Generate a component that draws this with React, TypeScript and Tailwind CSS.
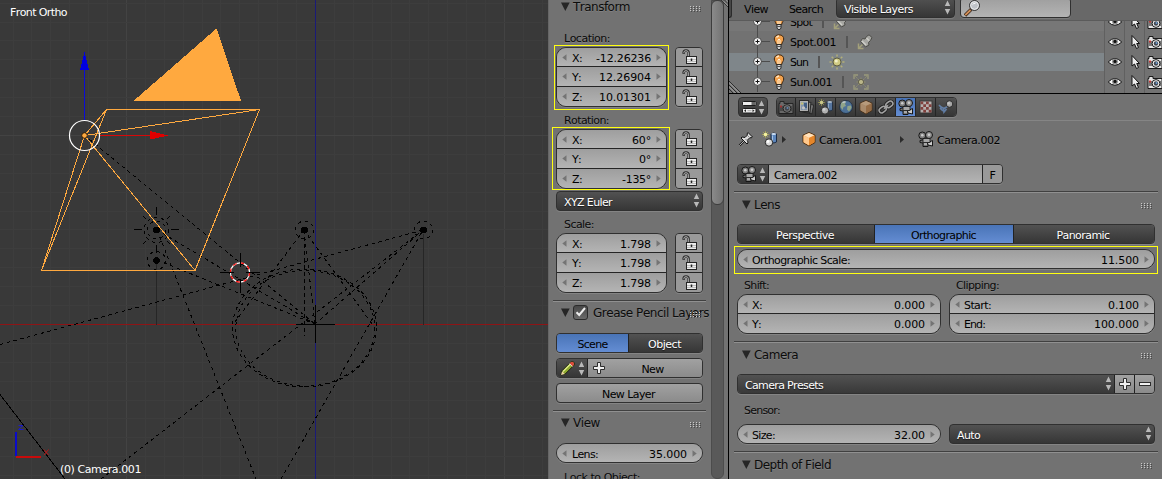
import React, { useLayoutEffect, useRef, useState } from "react";

/* Advance widths of the interface font, in thousandths of an em. */
const ADV: Record<string, number> = {
  " ": 318, "(": 390, ")": 390, "-": 361, ".": 318, ":": 337, "°": 500,
  A: 684, B: 686, C: 698, D: 770, E: 632, F: 575, G: 775, L: 557, N: 748, O: 787, P: 603, R: 695,
  S: 635, T: 611, V: 684, X: 685, Y: 611, Z: 685,
  a: 613, b: 635, c: 550, d: 635, e: 615, f: 352, g: 635, h: 634, i: 278, j: 278, k: 579, l: 278,
  m: 974, n: 634, o: 612, p: 635, r: 411, s: 521, t: 392, u: 634, v: 592, w: 818, x: 592, y: 592, z: 525,
};

/* Text set on whole-pixel advances, as the toolkit draws it. */
function T({ children, big = false, className = "" }: { children: string; big?: boolean; className?: string }) {
  const ref = useRef<HTMLSpanElement>(null);
  const [ls, setLs] = useState(0);
  useLayoutEffect(() => {
    if (!ref.current) return;
    const size = big ? 12 : 11;
    let want = 0;
    for (const c of children) {
      want += c >= "0" && c <= "9" ? (big ? 8 : 7) : Math.floor(((ADV[c] ?? 600) * size) / 1000);
    }
    ref.current.style.letterSpacing = "0px";
    setLs((want - ref.current.getBoundingClientRect().width) / children.length);
  }, [children, big]);
  return (
    <span
      ref={ref}
      style={{ letterSpacing: `${ls}px` }}
      className={`whitespace-pre [font-kerning:none] ${big ? "text-[12px]" : "text-[11px]"} ${className}`}
    >
      {children}
    </span>
  );
}

const SH_LIGHT = "[text-shadow:0_1px_0_rgba(255,255,255,0.12)]";
const SH_DARK = "[text-shadow:0_1px_1px_rgba(0,0,0,0.6)]";
const EDGE = "border border-[#303030] shadow-[0_1px_0_rgba(255,255,255,0.13)]";
const DARK = "bg-linear-to-b from-[#525252] to-[#363636]";
const BLUE = "bg-linear-to-b from-[#4974b7] to-[#648dd3]";
const GREY = "bg-linear-to-b from-[#a1a1a1] to-[#8b8b8b]";
const NUM = "bg-linear-to-b from-[#9e9e9e] to-[#b4b4b4]";
const LINE = "pt-[3px] leading-[15px]";

function UpDown() {
  return (
    <svg width="7" height="15" viewBox="0 0 7 15" className="shrink-0">
      <path d="M3.500.5 6.200 6H.8zM3.500 14.500 6.200 9H.8z" fill="#b9b9b9" />
    </svg>
  );
}

function Tri({ left = false }: { left?: boolean }) {
  return (
    <svg width="5" height="7" viewBox="0 0 5 7" className="shrink-0 self-center">
      <path d={left ? "M4.500.3V6.700L.3 3.500z" : "M.5.300V6.700L4.700 3.500z"} fill="#747474" />
    </svg>
  );
}

function NumRow({ label, value, h, tight, last }: { label: string; value: string; h: string; tight: boolean; last: boolean }) {
  return (
    <div className={`flex items-start px-[5px] ${NUM} ${h} ${last ? "" : "border-b border-[#252525]"}`}>
      <Tri left />
      <div className={`flex flex-1 justify-between pr-[5px] text-black ${LINE} ${tight ? "pl-[4px]" : "pl-[5px]"}`}>
        <T>{label}</T>
        <T>{value}</T>
      </div>
      <Tri />
    </div>
  );
}

const HEIGHTS: Record<number, string[]> = {
  1: ["h-[18px]"],
  2: ["h-[19px]", "h-[19px]"],
  3: ["h-[19px]", "h-[20px]", "h-[19px]"],
};

function NumGroup({ rows, w, ml = "", tight = false }: { rows: [string, string][]; w: string; ml?: string; tight?: boolean }) {
  return (
    <div className={`overflow-hidden rounded-[10px] ${EDGE} ${w} ${ml}`}>
      {rows.map(([l, v], i) => (
        <NumRow key={l} label={l} value={v} tight={tight} last={i === rows.length - 1} h={HEIGHTS[rows.length][i]} />
      ))}
    </div>
  );
}

function Lock() {
  return (
    <svg width="16" height="16" viewBox="0 0 16 16" className="ml-px">
      <path d="M1.700 4.800V3.400Q1.900 1.500 4 1.500 6.500 1.500 6.500 3.800V7.500" fill="none" stroke="#292929" strokeWidth="2.600" />
      <path d="M1.900 4V3.300Q2 1.700 4 1.700 6.300 1.700 6.300 3.800V8" fill="none" stroke="#b5b5b5" strokeWidth="1" />
      <rect x="4.500" y="7.500" width="10" height="7" fill="#ececec" stroke="#252525" />
      <path d="M5 10.500h9M5 12.500h9" stroke="#bcbcbc" />
      <path d="M9.500 9.500v2.500" stroke="#222" strokeWidth="1.500" />
    </svg>
  );
}

function LockGroup() {
  return (
    <div className={`ml-2 w-7 overflow-hidden rounded-[4px] ${EDGE}`}>
      {HEIGHTS[3].map((h, i) => (
        <div key={i} className={`flex items-center justify-center bg-[#999] ${h} ${i < 2 ? "border-b border-[#252525]" : ""}`}>
          <Lock />
        </div>
      ))}
    </div>
  );
}

function Grip() {
  return (
    <svg width="11" height="6" viewBox="0 0 11 6" shapeRendering="crispEdges">
      {[0, 3, 6, 9].map((x) =>
        [0, 2, 4].map((y) => <rect key={`${x}-${y}`} x={x} y={y} width="1" height="1" fill="#c9c9c9" />),
      )}
      {[1, 4, 7, 10].map((x) =>
        [1, 3, 5].map((y) => <rect key={`${x}-${y}`} x={x} y={y} width="1" height="1" fill="#4a4a4a" />),
      )}
    </svg>
  );
}

function Title({ children, check = false, wide = false }: { children: string; check?: boolean; wide?: boolean }) {
  return (
    <div className="flex h-[20px] items-start pl-[8px] pr-[6px]">
      <svg width="9" height="10" viewBox="0 0 9 10" className="mt-[5px] shrink-0">
        <path d="M0 .5H8.700L4.300 9z" fill="#262626" />
      </svg>
      {check && (
        <div className="ml-[3px] mt-[2px] flex size-[15px] shrink-0 items-center justify-center rounded-[3px] border border-[#2b2b2b] bg-linear-to-b from-[#484848] to-[#6a6a6a]">
          <svg width="13" height="13" viewBox="0 0 13 13" className="shrink-0">
            <path d="M2.500 6.200 5.200 9 11 2" fill="none" stroke="#eee" strokeWidth="2" />
          </svg>
        </div>
      )}
      <div className={`flex-1 pt-[2px] text-[12px] leading-[16px] text-[#0c0c0c] ${check ? "ml-[5px] w-0" : "ml-[3px]"} ${SH_LIGHT}`}>
        <T big>{children}</T>
      </div>
      <div className={wide ? "pt-[8px]" : "pt-[9px]"}>
        <Grip />
      </div>
    </div>
  );
}

const Rule = ({ className = "" }: { className?: string }) => (
  <div className={`h-[2px] shrink-0 border-b border-t border-b-[#909090] border-t-[#404040] ${className}`} />
);

function Label({ children, className = "" }: { children: string; className?: string }) {
  return (
    <div className={`h-[16px] leading-[15px] text-[#0a0a0a] ${SH_LIGHT} ${className}`}>
      <T>{children}</T>
    </div>
  );
}

/* ---------- icons, 16x16 ---------- */

const I = ({ children, className = "" }: { children: React.ReactNode; className?: string }) => (
  <svg width="16" height="16" viewBox="0 0 16 16" className={`shrink-0 ${className}`}>
    {children}
  </svg>
);

const MovieCam = () => (
  <I>
    <path d="M4.500 9 10 9.500V15.500H5V12L2 11.500V9.500z" fill="#777" stroke="#161616" />
    <path d="M9.500 12 14.500 9.500V15L10 14z" fill="#ccc" stroke="#161616" />
    <circle cx="4.300" cy="4.500" r="3.500" fill="#7d7d7d" stroke="#161616" />
    <circle cx="11" cy="4" r="3.500" fill="#8f8f8f" stroke="#161616" />
    <rect x="5" y="7.500" width="7" height="4" fill="#a7a7a7" stroke="#161616" strokeWidth=".8" />
    <circle cx="4.300" cy="4.300" r="1.300" fill="#ccc" />
    <circle cx="11" cy="3.800" r="1.300" fill="#ccc" />
    <path d="M6 13h3" stroke="#ddd" />
  </I>
);
const Cube = ({ dim = false }: { dim?: boolean }) => (
  <I>
    <path d="M8 1.500 14 4.200V11.500L8 15 2 11.500V4.200z" fill={dim ? "#c08f5e" : "#f0973a"} stroke="#4a2c10" />
    <path d="M2.500 4.500 8 7V14.400L2.500 11.200z" fill={dim ? "#cda37a" : "#ffc88c"} />
    <path d="M2.600 4.300 8 1.900 13.400 4.300 8 6.900z" fill={dim ? "#dcb68e" : "#ffe2bd"} />
    <path d="M8 7 13.500 4.500V11.200L8 14.400z" fill={dim ? "#b37b48" : "#e5862a"} />
  </I>
);
const SceneIcon = () => (
  <I>
    <path d="M9 3Q11.500 1 14.500 3V11Q12 13 9 11z" fill="#5c86bd" stroke="#1c2c44" />
    <ellipse cx="11.700" cy="3" rx="2.400" ry="1" fill="#cfe0f3" />
    <path d="M10.500 4.500v6" stroke="#a9c6e6" />
    <circle cx="7" cy="11.500" r="3.700" fill="#d8d8d8" stroke="#252525" />
    <circle cx="6" cy="10.500" r="1.400" fill="#fff" />
    <path d="M3.500 0v7M0 3.500h7M1 1l5 5M6 1 1 6" stroke="#b9b44e" strokeWidth=".7" />
    <circle cx="3.500" cy="3.500" r="1.800" fill="#f4f1a0" />
  </I>
);
const PhotoCam = ({ dim = false }: { dim?: boolean }) => (
  <I>
    <path d="M1 4.500H2V2.500H6V4.500H15V14.500H1z" fill={dim ? "#777" : "#e3e3e3"} stroke="#1b1b1b" />
    <rect x="1.500" y="7" width="13" height="5" fill={dim ? "#4c4c4c" : "#777"} />
    <circle cx="9" cy="9.500" r="3.900" fill={dim ? "#8c8c8c" : "#f0f0f0"} stroke="#1b1b1b" />
    <circle cx="9" cy="9.500" r="2.200" fill="#41464f" />
    <circle cx="9.500" cy="9" r="1" fill="#6f9dd0" />
    <path d="M3 6.500v2" stroke="#d22" strokeWidth="1.500" />
  </I>
);
const Layers = () => (
  <I>
    <rect x="6" y="5" width="9" height="9" fill="#888" stroke="#222" transform="rotate(12 10 9)" />
    <rect x="3.500" y="3" width="9" height="10" fill="#a5a5a5" stroke="#222" transform="rotate(5 8 8)" />
    <rect x="1.500" y="1.500" width="9" height="11" fill="#d6d6d6" stroke="#222" />
    <rect x="3" y="3" width="6" height="8" fill="#98b2d2" />
    <path d="M6 4h3v5H6z" fill="#42689c" />
    <circle cx="5.500" cy="8.800" r="1.600" fill="#eee" />
    <circle cx="4.200" cy="4.500" r="1.200" fill="#efe884" />
  </I>
);
const World = () => (
  <I>
    <circle cx="8" cy="8" r="6.500" fill="#5080b5" stroke="#1d2d42" />
    <path d="M3 4Q5 1.500 8 2.500L7 5 8 7 5.500 8 4.500 11 2.500 8zM9.500 7 13 6.500 13.500 9 11 12.500 9 10.500z" fill="#a9c3a0" />
    <path d="M4.500 3.500 7.500 2.800" stroke="#e2eef8" strokeWidth="1.400" />
  </I>
);
const Chain = () => (
  <I>
    <g fill="none" transform="rotate(-38 8 8)">
      <g stroke="#191919" strokeWidth="3.400">
        <rect x="0" y="5.500" width="7.500" height="5" rx="2.500" />
        <rect x="8.500" y="5.500" width="7.500" height="5" rx="2.500" />
      </g>
      <g stroke="#c4c4c4" strokeWidth="1.500">
        <rect x="0" y="5.500" width="7.500" height="5" rx="2.500" />
        <rect x="8.500" y="5.500" width="7.500" height="5" rx="2.500" />
        <path d="M5.500 8h5" />
      </g>
    </g>
  </I>
);
const Checker = () => (
  <I>
    <rect x="2" y="2" width="12" height="12" fill="#ddd5d3" stroke="#333" />
    {[0, 1, 2, 3].map((r) =>
      [0, 1, 2, 3].map((c) =>
        (r + c) % 2 === 0 ? <rect key={`${r}${c}`} x={2.5 + c * 2.75} y={2.5 + r * 2.75} width="2.750" height="2.750" fill="#96403c" /> : null,
      ),
    )}
  </I>
);
const Physics = () => (
  <I>
    <path d="M1 6 3 8 6 9.500 9.500 7.500M5.500 9.500 6 13 8.500 10M2 9 5 12" stroke="#6d92c6" strokeWidth="1.700" fill="none" />
    <circle cx="11.500" cy="5" r="3.300" fill="#c7c7c7" stroke="#252525" />
    <circle cx="10.700" cy="4.200" r="1.200" fill="#eee" />
  </I>
);
const Pin = () => (
  <I>
    <path d="M6 10 1.500 14.500" stroke="#161616" strokeWidth="2.200" />
    <path d="M6 10 1.500 14.500" stroke="#ddd" strokeWidth=".8" />
    <path d="M10 1.500 14.500 6 13 7 12 6.500 9.500 9 10 12 9 13 3 7 4 6 7 6.500 9.500 4 9 3z" fill="#dcdcdc" stroke="#161616" />
    <path d="M7.500 8 9.500 10M10 5 11.500 6.500" stroke="#888" />
  </I>
);
const Bulb = () => (
  <I>
    <path d="M8 .8C4.800.8 3.300 2.800 3.300 5S5 8 5.300 10.500H10.700C11 8 12.700 7.200 12.700 5S11.200.8 8 .8z" fill="#f3a24e" stroke="#3e2812" />
    <path d="M5.500 3.500Q6.500 2 8 2" stroke="#ffe9c9" strokeWidth="1.500" fill="none" />
    <path d="M7 10V6L8 5 9 6V10" stroke="#fff0d6" fill="none" />
    <path d="M6 10.500H10V14L9 15.500H7L6 14z" fill="#d2d2d2" stroke="#2b2b2b" />
    <path d="M6 12.500h4" stroke="#555" />
  </I>
);
const SpotIcon = () => (
  <I>
    <path d="M1.500 9.500v5h5M1.500 14.500 5.500 10.500" stroke="#a3a07a" strokeWidth="1.500" fill="none" />
    <path d="M9.500 2.500 12 .8 15 3.500 13.500 6.500 11.500 8.500 12 11 8.500 13 3.500 7.500 5.500 4.500 8 5z" fill="#a6a6a2" stroke="#4c4c48" />
    <path d="M5 7 9 11M9.500 4 12 6.500" stroke="#cfcfc9" strokeWidth="1.400" />
  </I>
);
const SunIcon = () => (
  <I>
    <path d="M8 .5v15M.5 8h15M2.700 2.700l10.600 10.600M13.300 2.700 2.700 13.300" stroke="#b3af79" strokeWidth="1.500" />
    <circle cx="8" cy="8" r="5.400" fill="#7f8684" />
    <circle cx="8" cy="8" r="4" fill="#cfca82" stroke="#5e5c42" />
    <circle cx="7.300" cy="7" r="1.500" fill="#f2f0c9" />
  </I>
);
const AreaIcon = () => (
  <I>
    <path d="M1 5V1H5M11 1h4v4M15 11v4h-4M5 15H1V11" stroke="#9b9a7c" strokeWidth="1.300" fill="none" />
    <path d="M1.500 1.500 4.500 4.500M14.500 1.500l-3 3M14.500 14.500l-3-3M1.500 14.500l3-3M8 3.500v9M3.500 8h9M5 5l6 6M11 5l-6 6" stroke="#8f8e6e" strokeWidth=".9" />
    <circle cx="8" cy="8" r="2.600" fill="#bbb78a" stroke="#5c5a46" strokeWidth=".9" />
  </I>
);
const Eye = () => (
  <I>
    <path d="M1.200 8Q7.800 1 14.800 8Q7.800 14.500 1.200 8z" fill="#f4f4f4" stroke="#181818" />
    <circle cx="8" cy="7.600" r="2.900" fill="#8f8f8f" />
    <circle cx="8" cy="7.400" r="1.600" fill="#111" />
  </I>
);
const Cursor = () => (
  <I>
    <path d="M5 1.500V12L7.500 10 9.500 14.500 11.500 13.500 9.700 9.500H12.500z" fill="#eee" stroke="#101010" />
  </I>
);
const PlusIcon = () => (
  <svg width="12" height="12" viewBox="0 0 12 12" className="shrink-0">
    <path d="M4.500.5h3v4h4v3h-4v4h-3v-4h-4v-3h4z" fill="#efefef" stroke="#2c2c2c" />
  </svg>
);
const MinusIcon = () => (
  <svg width="12" height="12" viewBox="0 0 12 12" className="shrink-0">
    <rect x=".5" y="4.500" width="11" height="3" fill="#efefef" stroke="#2c2c2c" />
  </svg>
);
const Pencil = () => (
  <I>
    <path d="M1 15 2 10.800 10.500 2.300Q12 .8 13.800 2.200 15.200 4 13.700 5.500L5.200 14z" fill="#8ea92f" stroke="#1f2410" />
    <path d="M3 11.500 10.500 4" stroke="#e1ee8c" strokeWidth="1.300" />
    <path d="M10.500 2.500Q12.200 1 13.500 2.500T13.500 5.300L12.500 6.300 9.700 3.400z" fill="#de4a3c" />
    <path d="M9.500 3.600 12.400 6.500" stroke="#ddd" />
    <path d="M1 15 2.100 11.200 4.800 14z" fill="#ecd3a5" />
  </I>
);
const Magnifier = () => (
  <svg width="18" height="17" viewBox="0 0 18 17">
    <path d="M1 15.500 7 9.500" stroke="#3b2618" strokeWidth="3.400" />
    <path d="M1.200 15.200 6.500 10" stroke="#d38f57" strokeWidth="1.800" />
    <circle cx="10.500" cy="5.500" r="4.900" fill="#bfc3c8" stroke="#222" />
    <circle cx="10.500" cy="5.500" r="3.900" fill="none" stroke="#f1f1f1" />
    <path d="M8.500 4.700Q9.500 3.200 11.500 3.200" stroke="#fff" fill="none" />
  </svg>
);

/* ---------- 3D viewport ---------- */

function Lamp({ x, y }: { x: number; y: number }) {
  return (
    <g>
      <circle cx={x} cy={y} r="3.400" fill="#000" />
      <circle cx={x} cy={y} r="9" fill="none" stroke="#000" strokeDasharray="3 4.070" />
    </g>
  );
}

function Viewport() {
  const cols = Array.from({ length: 29 }, (_, i) => i - 16);
  const rows = Array.from({ length: 26 }, (_, i) => i - 17);
  const links: [number, number, number, number][] = [
    [84, 135, 315, 324], [157, 230, 315, 324], [157, 260, 315, 324], [0, 344.5, 423, 230],
    [157, 230, 256, 479], [101, 479, 423, 230], [315, 324, 423, 230], [281, 479, 423, 230],
    [304, 230, 315, 324], [304.5, 230, 304.5, 336], [304, 230, 235, 322], [304, 230, 372, 324],
  ];
  return (
    <svg width="548" height="479" viewBox="0 0 548 479" className="shrink-0 bg-[#393939]">
      <g shapeRendering="crispEdges">
        {cols.map((i) => (
          <rect key={`c${i}`} x={Math.floor(315.4 + i * 18.9)} y="0" width="1" height="479" fill={i % 10 === 0 ? "#434343" : "#3d3d3d"} />
        ))}
        {rows.map((i) => (
          <rect key={`r${i}`} x="0" y={Math.floor(324.4 + i * 18.9)} width="548" height="1" fill={i % 10 === 0 ? "#434343" : "#3d3d3d"} />
        ))}
        <rect x="0" y="324" width="548" height="1" fill="#8e1416" />
        <rect x="315" y="0" width="1" height="479" fill="#1a1a78" />
        <path d="M156.500 262V325M423.500 234V325" stroke="#262626" />
        <g stroke="#000" strokeDasharray="3.500 3.500" fill="none">
          {links.map(([a, b, c, d], i) => (
            <line key={i} x1={a} y1={b} x2={c} y2={d} />
          ))}
          <ellipse cx="304.500" cy="328" rx="72" ry="59" />
          <ellipse cx="305.300" cy="328.300" rx="69.500" ry="57.800" strokeDasharray="3 4" />
        </g>
        <path d="M296 324.500H335M315.500 305V343M0 394.500 65 479" stroke="#000" />
        <Lamp x={156.500} y={230} />
        <Lamp x={156.500} y={260.500} />
        <Lamp x={304.500} y={230} />
        <Lamp x={423.500} y={230} />
        <g stroke="#000" fill="none">
          <circle cx="156.500" cy="230" r="12.500" strokeDasharray="3 4" />
          <path d="M134 229.500h8M171 229.500h8M156.500 207v8M156.500 245v8M143 216l3 3M170 216l-3 3M143 244l3-3M170 244l-3-3" />
        </g>
        <path
          d="M106.500 109.500H259.500L195 270.500H41.500zM84.500 135.500 106.500 109.500M84.500 135.500 259.500 109.500M84.500 135.500 195 270.500M84.500 135.500 41.500 270.500"
          stroke="#ffa93f"
          fill="none"
        />
        <path d="M216.500 28.500 241 100.800H133.700z" fill="#ffa93f" />
        <path d="M84.500 69V120" stroke="#0b0bd8" />
        <path d="M84.500 51.500 80 70H89z" fill="#0000e0" />
        <path d="M99 135.500H150" stroke="#d80808" />
        <path d="M150 131V139.500L168 135.500z" fill="#e00000" />
      </g>
      <circle cx="84.500" cy="135.500" r="15" fill="none" stroke="#fff" strokeWidth="1.200" />
      <circle cx="84.500" cy="135.500" r="2.800" fill="#ffa93f" stroke="#2b1a05" />
      <circle cx="240" cy="272.500" r="9.600" fill="none" stroke="#fff" strokeWidth="1.200" />
      <circle cx="240" cy="272.500" r="9.600" fill="none" stroke="#f00" strokeWidth="1.200" strokeDasharray="3.770" />
      <path d="M220 272.500H234M246 272.500H260M240.500 253V267M240.500 279V293" stroke="#000" shapeRendering="crispEdges" />
      <g shapeRendering="crispEdges">
        <rect x="15" y="432" width="2" height="24" fill="#0b0bcb" />
        <rect x="16" y="456" width="25" height="2" fill="#c80b0b" />
      </g>
      <path d="M18.500 425.500H23L18.500 429.500H23.500" stroke="#1c1cc8" fill="none" />
      <path d="M44 449.500 48.500 455M48.500 449.500 44 455" stroke="#b81616" fill="none" />
    </svg>
  );
}

/* ---------- sidebar ---------- */

function Sidebar() {
  return (
    <div className="flex w-[180px] shrink-0 overflow-hidden border-l border-[#666] bg-[#727272]">
      <div className="flex w-[158px] shrink-0 flex-col pl-[4px] [&>*]:shrink-0">
        <div className="-mt-[3px]"><Title>Transform</Title></div>
        <Label className="ml-[11px] mt-[14px]">Location:</Label>
        <div className="relative ml-[3px] flex">
          <div className="absolute -left-[2px] -top-[2px] h-[65px] w-[115px] border border-[#ffff10]" />
          <NumGroup w="w-[111px]" rows={[["X:", "-12.26236"], ["Y:", "12.26904"], ["Z:", "10.01301"]]} />
          <LockGroup />
        </div>
        <Label className="ml-[11px] mt-[6px]">Rotation:</Label>
        <div className="relative ml-[3px] flex">
          <div className="absolute -left-[4px] -top-[2px] h-[63px] w-[118px] border border-[#ffff10]" />
          <NumGroup w="w-[111px]" rows={[["X:", "60°"], ["Y:", "0°"], ["Z:", "-135°"]]} />
          <LockGroup />
        </div>
        <Dropdown className={`ml-[3px] mt-[2px] w-[147px] rounded-[4px] ${EDGE}`}>XYZ Euler</Dropdown>
        <Label className="ml-[11px] mt-[6px]">Scale:</Label>
        <div className="ml-[3px] flex">
          <NumGroup w="w-[111px]" rows={[["X:", "1.798"], ["Y:", "1.798"], ["Z:", "1.798"]]} />
          <LockGroup />
        </div>
        <Rule className="mr-px mt-[7px]" />
        <div className="mt-px"><Title check>Grease Pencil Layers</Title></div>
        <div className={`ml-[3px] mt-[10px] flex h-[20px] w-[147px] overflow-hidden rounded-[4px] text-center ${EDGE}`}>
          <div className={`w-[72px] border-r border-[#222] text-black ${LINE} ${BLUE}`}><T>Scene</T></div>
          <div className={`flex-1 pr-[2px] text-white ${LINE} ${DARK} ${SH_DARK}`}><T>Object</T></div>
        </div>
        <div className={`ml-[3px] mt-[5px] flex h-[20px] w-[147px] overflow-hidden rounded-[4px] ${EDGE}`}>
          <div className={`flex w-[31px] items-center justify-between border-r border-[#222] pl-[3px] pr-[2px] ${DARK}`}>
            <Pencil />
            <UpDown />
          </div>
          <div className={`flex flex-1 items-center pl-[5px] text-black ${GREY}`}>
            <PlusIcon />
            <div className={`flex-1 pr-[2px] text-center ${LINE}`}><T>New</T></div>
          </div>
        </div>
        <div className={`ml-[3px] mt-[5px] h-[20px] w-[147px] rounded-[4px] pr-[2px] text-center text-black ${LINE} ${EDGE} ${GREY}`}>
          <T>New Layer</T>
        </div>
        <Rule className="mr-px mt-[7px]" />
        <div className="mt-px"><Title>View</Title></div>
        <NumGroup w="w-[147px]" ml="ml-[3px] mt-[10px]" rows={[["Lens:", "35.000"]]} />
        <Label className="ml-[11px] mt-[7px]">Lock to Object:</Label>
      </div>
      <div className="ml-[4px] h-[479px] w-[13px] shrink-0 rounded-b-[6px] border border-[#4c4c4c] bg-[#595959]">
        <div className="-ml-px -mt-px h-[205px] w-[13px] rounded-[6px] border border-[#3d3d3d] bg-linear-to-r from-[#8a8a8a] to-[#737373]" />
      </div>
      <svg width="7" height="9" viewBox="0 0 7 9" className="-ml-[3px] shrink-0">
        <path d="M0 0 7 7M3.500 0 7 3.500" stroke="#333" />
        <path d="M1.200 0 7 5.800M4.700 0 7 2.300" stroke="#aaa" strokeWidth=".7" />
      </svg>
    </div>
  );
}

/* ---------- outliner ---------- */

function OutRow({ name, icon, cls }: { name: string; icon: React.ReactNode; cls: string }) {
  return (
    <div className="flex h-[20px] shrink-0">
      <div className={`mb-[2px] flex h-[18px] flex-1 items-center pl-[24px] ${cls}`}>
        <svg width="17" height="20" viewBox="0 0 17 20" className="-my-px shrink-0">
          <path d="M4.500 0V20M8 9.500H17" stroke="#4c4c4c" />
          <circle cx="4.500" cy="9.500" r="3.900" fill="#f0f0f0" stroke="#2a2a2a" strokeWidth=".8" />
          <path d="M2.500 9.500h4M4.500 7.500v4" stroke="#111" />
        </svg>
        <div className="ml-px"><Bulb /></div>
        <div className="ml-[3px] pb-px pt-[2px] leading-[15px] text-black"><T>{name}</T></div>
        <div className="ml-[10px] h-[12px] w-[2px] bg-[#555]" />
        <div className="ml-[9px]">{icon}</div>
      </div>
      {[<Eye key="e" />, <Cursor key="c" />, <PhotoCam key="p" />].map((ic, i) => (
        <div key={i} className={`flex items-center border-l border-[#606060] pb-[2px] pl-[2px] ${i === 2 ? "w-[18px]" : "w-[20px]"}`}>{ic}</div>
      ))}
    </div>
  );
}

function Outliner() {
  return (
    <div className="h-[93px] shrink-0 overflow-hidden">
      <div className="flex h-[21px] items-start border-b border-[#5b5b5b] bg-[#686868] text-black">
        <div className="h-[18px] w-[3px] rounded-br-[4px] border-b border-r border-[#2b2b2b] bg-[#474747]" />
        <div className="ml-[12px] w-[45px] pt-[2px] leading-[15px]"><T>View</T></div>
        <div className="w-[47px] pt-[2px] leading-[15px]"><T>Search</T></div>
        <div className={`-mt-[3px] flex h-[21px] w-[119px] items-center justify-between rounded-[4px] pl-[7px] pr-[3px] text-white ${EDGE} ${DARK} ${SH_DARK}`}>
          <div className="pt-[4px] leading-[15px]"><T>Visible Layers</T></div>
          <UpDown />
        </div>
        <div className={`-mt-[3px] ml-[5px] h-[21px] w-[111px] rounded-[4px] pl-[3px] pt-[2px] ${EDGE} ${NUM}`}>
          <Magnifier />
        </div>
      </div>
      <div className="flex h-[72px] flex-col overflow-hidden">
        <div className="h-[12px] shrink-0 overflow-hidden">
          <div className="-mt-[8px]"><OutRow name="Spot" icon={<SpotIcon />} cls="bg-[#777777]" /></div>
        </div>
        <OutRow name="Spot.001" icon={<SpotIcon />} cls="" />
        <OutRow name="Sun" icon={<SunIcon />} cls="bg-[#7f868a]" />
        <OutRow name="Sun.001" icon={<AreaIcon />} cls="" />
      </div>
    </div>
  );
}

/* ---------- properties editor ---------- */

function Dropdown({ children, className }: { children: string; className: string }) {
  return (
    <div className={`flex h-[20px] items-start justify-between pl-[7px] pr-[2px] text-white ${DARK} ${SH_DARK} ${className}`}>
      <div className={LINE}><T>{children}</T></div>
      <div className="pt-px"><UpDown /></div>
    </div>
  );
}

function Properties() {
  const tabs = [<PhotoCam dim key="0" />, <Layers key="1" />, <SceneIcon key="2" />, <World key="3" />, <Cube dim key="4" />, <Chain key="5" />, <MovieCam key="6" />, <Checker key="7" />, <Physics key="8" />];
  return (
    <div className="flex flex-1 flex-col overflow-hidden border-t border-black">
      <div className="flex h-[27px] shrink-0 items-start border-b border-[#858585] pl-[9px] pt-[3px]">
        <div className={`flex h-[20px] w-[30px] items-center justify-between rounded-[4px] pl-[3px] pr-[2px] ${EDGE} ${DARK}`}>
          <svg width="15" height="14" viewBox="0 0 15 14">
            <rect x=".5" y="1.500" width="13.500" height="4" rx="1" fill="#eee" stroke="#1c1c1c" />
            <rect x="9.500" y="2" width="4" height="3" fill="#666" />
            <rect x=".5" y="8.500" width="13.500" height="4.500" rx="1" fill="#eee" stroke="#1c1c1c" />
            <path d="M2 10.700 4 9.300V12zM12.500 10.700 10.500 9.300V12z" fill="#222" />
            <path d="M5.500 10.700h4" stroke="#aaa" />
          </svg>
          <UpDown />
        </div>
        <div className={`ml-[8px] flex h-[20px] w-[181px] overflow-hidden rounded-[4px] ${EDGE}`}>
          {tabs.map((t, i) => (
            <div key={i} className={`flex shrink-0 items-center justify-center border-[#252525] ${i === 0 ? "w-[19px]" : "w-[20px]"} ${i < 8 ? "border-r" : ""} ${i === 6 ? BLUE : DARK}`}>
              <div className={i === 6 ? "" : "opacity-75"}>{t}</div>
            </div>
          ))}
        </div>
      </div>
      <div className="flex h-[36px] shrink-0 items-center pl-[9px] text-black">
        <Pin />
        <div className="ml-[8px]"><SceneIcon /></div>
        <svg width="4" height="7" viewBox="0 0 4 7" className="ml-[4px]"><path d="M0 0V7L4 3.500z" fill="#2b2b2b" /></svg>
        <div className="ml-[15px]"><Cube /></div>
        <div className={`ml-[2px] w-[81px] ${LINE} ${SH_LIGHT}`}><T>Camera.001</T></div>
        <svg width="4" height="7" viewBox="0 0 4 7"><path d="M0 0V7L4 3.500z" fill="#2b2b2b" /></svg>
        <div className="ml-[14px]"><MovieCam /></div>
        <div className={`ml-[3px] ${LINE} ${SH_LIGHT}`}><T>Camera.002</T></div>
      </div>
      <div className={`ml-[8px] mt-[7px] flex h-[20px] w-[266px] shrink-0 overflow-hidden rounded-[4px] text-black ${EDGE}`}>
        <div className={`flex w-[31px] items-center justify-between border-r border-[#222] pl-[3px] pr-[2px] ${DARK}`}>
          <MovieCam />
          <UpDown />
        </div>
        <div className={`w-[214px] border-r border-[#252525] pl-[5px] ${LINE} ${NUM}`}><T>Camera.002</T></div>
        <div className={`flex-1 bg-[#999] text-center ${LINE}`}><T>F</T></div>
      </div>
      <Rule className="ml-[5px] mr-[4px] mt-[7px]" />
      <div className="ml-[5px] mr-[4px] mt-[2px] shrink-0"><Title wide>Lens</Title></div>
      <div className={`ml-[8px] mt-[9px] flex h-[20px] w-[418px] shrink-0 overflow-hidden rounded-[4px] text-center text-white ${EDGE}`}>
        <div className={`w-[137px] border-r border-[#222] pr-[2px] ${LINE} ${DARK} ${SH_DARK}`}><T>Perspective</T></div>
        <div className={`w-[139px] border-r border-[#222] pr-px text-black ${LINE} ${BLUE}`}><T>Orthographic</T></div>
        <div className={`flex-1 pr-[2px] ${LINE} ${DARK} ${SH_DARK}`}><T>Panoramic</T></div>
      </div>
      <div className="relative ml-[8px] mt-[5px] shrink-0">
        <div className="absolute -left-[3px] -top-[3px] h-[28px] w-[424px] border border-[#ffff10]" />
        <NumGroup tight w="w-[418px]" rows={[["Orthographic Scale:", "11.500"]]} />
      </div>
      <div className="ml-[15px] mt-[9px] flex shrink-0">
        <Label className="w-[212px]">Shift:</Label>
        <Label>Clipping:</Label>
      </div>
      <div className="ml-[8px] flex shrink-0">
        <NumGroup tight w="w-[204px]" rows={[["X:", "0.000"], ["Y:", "0.000"]]} />
        <NumGroup tight w="w-[206px]" ml="ml-[8px]" rows={[["Start:", "0.100"], ["End:", "100.000"]]} />
      </div>
      <Rule className="ml-[5px] mr-[4px] mt-[7px]" />
      <div className="ml-[5px] mr-[4px] mt-[2px] shrink-0"><Title wide>Camera</Title></div>
      <div className={`ml-[8px] mt-[9px] flex h-[20px] w-[418px] shrink-0 overflow-hidden rounded-[4px] ${EDGE}`}>
        <Dropdown className="w-[377px] border-r border-[#222]">Camera Presets</Dropdown>
        <div className={`flex w-[20px] items-center justify-center border-r border-[#222] ${GREY}`}><PlusIcon /></div>
        <div className={`flex flex-1 items-center justify-center ${GREY}`}><MinusIcon /></div>
      </div>
      <Label className="ml-[15px] mt-[9px] shrink-0">Sensor:</Label>
      <div className="ml-[8px] mt-[5px] flex shrink-0">
        <NumGroup tight w="w-[204px]" rows={[["Size:", "32.00"]]} />
        <Dropdown className={`ml-[8px] w-[206px] rounded-[4px] ${EDGE}`}>Auto</Dropdown>
      </div>
      <Rule className="ml-[5px] mr-[4px] mt-[7px]" />
      <div className="ml-[5px] mr-[4px] mt-[2px] shrink-0"><Title wide>Depth of Field</Title></div>
    </div>
  );
}

export default function App() {
  return (
    <div className="relative flex h-[479px] w-[1162px] overflow-hidden bg-[#727272] font-['DejaVu_Sans',sans-serif] text-[11px]">
      <Viewport />
      <Sidebar />
      <div className="flex w-[434px] shrink-0 flex-col border-l border-black bg-[#727272]">
        <Outliner />
        <Properties />
      </div>
      <svg width="14" height="12" viewBox="0 0 14 12" className="absolute left-[729px] top-[81px]">
        <path d="M0 0 12 12M0 4 8 12M0 8 4 12" stroke="#2d2d2d" />
        <path d="M0 1.500 10.500 12M0 5.500 6.500 12" stroke="#b5b5b5" strokeWidth=".8" />
      </svg>
      <div className="absolute left-[10px] top-[5px] leading-[15px] text-white"><T>Front Ortho</T></div>
      <div className="absolute left-[60px] top-[462px] leading-[15px] text-white"><T>(0) Camera.001</T></div>
    </div>
  );
}
